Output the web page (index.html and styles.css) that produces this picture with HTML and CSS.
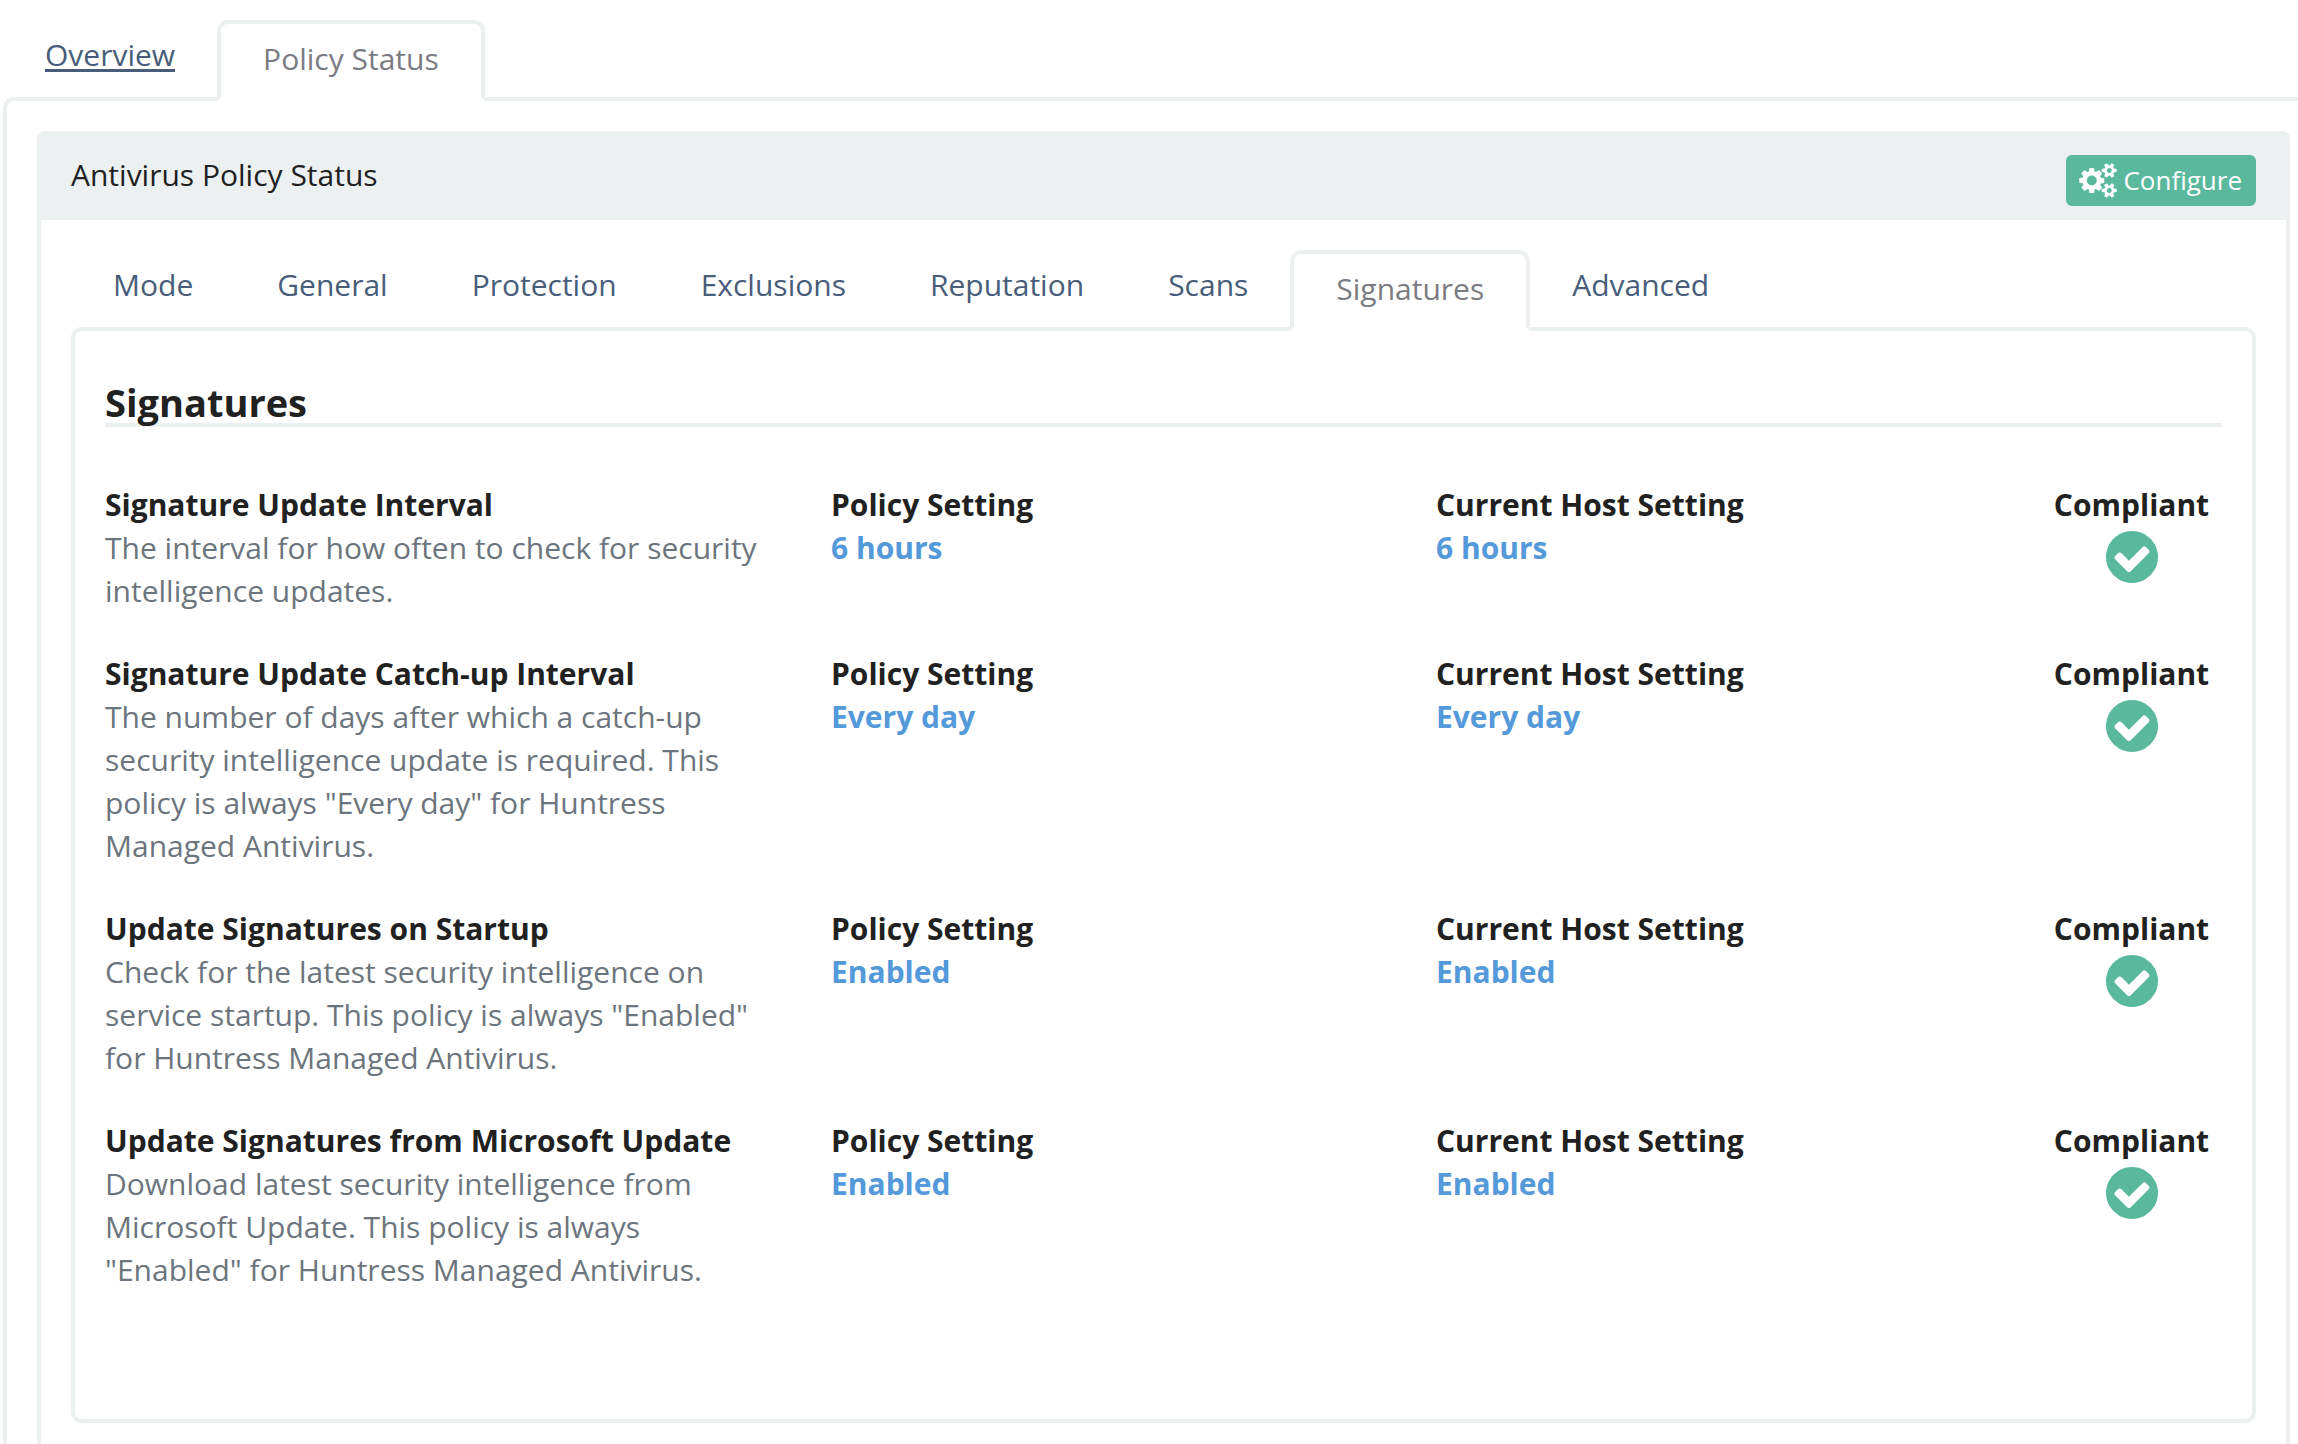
FILE: index.html
```html
<!DOCTYPE html>
<html lang="en">
<head>
<meta charset="utf-8">
<title>Antivirus Policy Status</title>
<link rel="stylesheet" href="styles.css">
</head>
<body>
<svg class="sprite" aria-hidden="true">
  <symbol id="check" viewBox="128 128 1536 1536"><path d="M1412 734q0-28-18-46l-91-90q-19-19-45-19t-45 19l-408 407-226-226q-19-19-45-19t-45 19l-91 90q-18 18-18 46 0 27 18 45l362 362q19 19 45 19 27 0 46-19l543-543q18-18 18-45zm252 162q0 209-103 385.5t-279.5 279.5-385.5 103-385.5-103-279.5-279.5-103-385.5 103-385.5 279.5-279.5 385.5-103 385.5 103 279.5 279.5 103 385.5z"/></symbol>
  <symbol id="cogs" viewBox="0 0 1920 1792"><path d="M896 896q0-106-75-181t-181-75-181 75-75 181 75 181 181 75 181-75 75-181zm768 512q0-52-38-90t-90-38-90 38-38 90q0 53 37.5 90.5t90.5 37.5 90.5-37.5 37.5-90.5zm0-1024q0-52-38-90t-90-38-90 38-38 90q0 53 37.5 90.5t90.5 37.5 90.5-37.5 37.5-90.5zm-384 421v185q0 10-7 19.5t-16 10.5l-155 24q-11 35-32 76 34 48 90 115 7 11 7 20 0 12-7 19-23 30-82.5 89.5t-78.5 59.5q-11 0-21-7l-115-90q-37 19-77 31-11 108-23 155-7 24-30 24h-186q-11 0-20-7.5t-10-17.5l-23-153q-34-10-75-31l-118 89q-7 7-20 7-11 0-21-8-144-133-144-160 0-9 7-19 10-14 41-53t47-61q-23-44-35-82l-152-24q-10-1-17-9.5t-7-19.5v-185q0-10 7-19.5t16-10.5l155-24q11-35 32-76-34-48-90-115-7-11-7-20 0-12 7-20 22-30 82-89t79-59q11 0 21 7l115 90q34-18 77-32 11-108 23-154 7-24 30-24h186q11 0 20 7.5t10 17.5l23 153q34 10 75 31l118-89q8-7 20-7 11 0 21 8 144 133 144 160 0 8-7 19-12 16-42 54t-45 60q23 48 34 82l152 23q10 2 17 10.5t7 19.5zm640 533v140q0 16-149 31-12 27-30 52 51 113 51 138 0 4-4 7-122 71-124 71-8 0-46-47t-52-68q-20 2-30 2t-30-2q-14 21-52 68t-46 47q-2 0-124-71-4-3-4-7 0-25 51-138-18-25-30-52-149-15-149-31v-140q0-16 149-31 13-29 30-52-51-113-51-138 0-4 4-7 4-2 35-20t59-34 30-16q8 0 46 46.5t52 67.5q20-2 30-2t30 2q51-71 92-112l6-2q4 0 124 70 4 3 4 7 0 25-51 138 17 23 30 52 149 15 149 31zm0-1024v140q0 16-149 31-12 27-30 52 51 113 51 138 0 4-4 7-122 71-124 71-8 0-46-47t-52-68q-20 2-30 2t-30-2q-14 21-52 68t-46 47q-2 0-124-71-4-3-4-7 0-25 51-138-18-25-30-52-149-15-149-31v-140q0-16 149-31 13-29 30-52-51-113-51-138 0-4 4-7 4-2 35-20t59-34 30-16q8 0 46 46.5t52 67.5q20-2 30-2t30 2q51-71 92-112l6-2q4 0 124 70 4 3 4 7 0 25-51 138 17 23 30 52 149 15 149 31z"/></symbol>
</svg>
<div class="page">
  <nav class="tabs" aria-label="Sections">
    <a class="tab tab-hover" href="#overview">Overview</a>
    <a class="tab tab-active" href="#policy" aria-current="page">Policy Status</a>
  </nav>
  <main class="outer-panel">
    <section class="card">
      <header class="card-header">
        <h1 class="card-title">Antivirus Policy Status</h1>
        <button class="configure" type="button"><svg class="cogs-icon" aria-hidden="true"><use href="#cogs"/></svg>Configure</button>
      </header>
      <div class="card-body">
        <nav class="tabs" aria-label="Policy areas">
          <a class="tab" href="#mode">Mode</a>
          <a class="tab" href="#general">General</a>
          <a class="tab" href="#protection">Protection</a>
          <a class="tab" href="#exclusions">Exclusions</a>
          <a class="tab" href="#reputation">Reputation</a>
          <a class="tab" href="#scans">Scans</a>
          <a class="tab tab-active" href="#signatures" aria-current="page">Signatures</a>
          <a class="tab" href="#advanced">Advanced</a>
        </nav>
        <section class="panel">
          <h2 class="panel-title">Signatures</h2>
          <div class="policies">
            <article class="policy">
              <div class="about"><h3 class="label">Signature Update Interval</h3><p class="description">The interval for how often to check for security intelligence updates.</p></div>
              <div><h4 class="label">Policy Setting</h4><p class="value">6 hours</p></div>
              <div><h4 class="label">Current Host Setting</h4><p class="value">6 hours</p></div>
              <div class="status"><h4 class="label">Compliant</h4><svg class="check-icon" role="img" aria-label="Yes"><use href="#check"/></svg></div>
            </article>
            <article class="policy">
              <div class="about"><h3 class="label">Signature Update Catch-up Interval</h3><p class="description">The number of days after which a catch-up security intelligence update is required. This policy is always "Every day" for Huntress Managed Antivirus.</p></div>
              <div><h4 class="label">Policy Setting</h4><p class="value">Every day</p></div>
              <div><h4 class="label">Current Host Setting</h4><p class="value">Every day</p></div>
              <div class="status"><h4 class="label">Compliant</h4><svg class="check-icon" role="img" aria-label="Yes"><use href="#check"/></svg></div>
            </article>
            <article class="policy">
              <div class="about"><h3 class="label">Update Signatures on Startup</h3><p class="description">Check for the latest security intelligence on service startup. This policy is always "Enabled" for Huntress Managed Antivirus.</p></div>
              <div><h4 class="label">Policy Setting</h4><p class="value">Enabled</p></div>
              <div><h4 class="label">Current Host Setting</h4><p class="value">Enabled</p></div>
              <div class="status"><h4 class="label">Compliant</h4><svg class="check-icon" role="img" aria-label="Yes"><use href="#check"/></svg></div>
            </article>
            <article class="policy">
              <div class="about"><h3 class="label">Update Signatures from Microsoft Update</h3><p class="description">Download latest security intelligence from Microsoft Update. This policy is always "Enabled" for Huntress Managed Antivirus.</p></div>
              <div><h4 class="label">Policy Setting</h4><p class="value">Enabled</p></div>
              <div><h4 class="label">Current Host Setting</h4><p class="value">Enabled</p></div>
              <div class="status"><h4 class="label">Compliant</h4><svg class="check-icon" role="img" aria-label="Yes"><use href="#check"/></svg></div>
            </article>
          </div>
        </section>
      </div>
    </section>
  </main>
</div>
</body>
</html>
```
FILE: styles.css
```css
:root {
  --line: #ecf0f1;
  --green: #5ab99d;
  --link: #475d7a;
  --text: #212121;
}

* { box-sizing: border-box; }

body {
  margin: 0;
  background: #fff;
  color: var(--text);
  font: 30px/43px "Open Sans", "Noto Sans", sans-serif;
}

h1, h2, h3, h4, p { margin: 0; font-size: inherit; }

.sprite { display: none; }

.page {
  display: flex;
  flex-direction: column;
  min-height: 100vh;
  padding: 20px 0 0 3px;
}

/* Tabs: the active one overlaps the top border of the panel below */
.tabs { display: flex; }

.tab {
  padding: 13px 42px 17px;
  color: var(--link);
  text-decoration: none;
}

.tab:hover, .tab-hover {
  text-decoration: underline;
  text-decoration-thickness: 3px;
  text-underline-offset: 3px;
}

.tab-active {
  margin-bottom: -4px;
  border: 4px solid var(--line);
  border-bottom-color: #fff;
  border-radius: 11px 11px 0 0;
  background: #fff;
  color: #7b7b82;
  position: relative;
}

.outer-panel {
  display: flex;
  flex: 1;
  padding: 30px 8px 0 30px;
  border: 4px solid var(--line);
  border-width: 4px 0 0 4px;
  border-radius: 11px 0 0 0;
}

.card {
  flex: 1;
  border: 4px solid var(--line);
  border-bottom: 0;
  border-radius: 8px 8px 0 0;
}

.card-header {
  display: flex;
  justify-content: space-between;
  align-items: flex-start;
  padding: 20px 30px 14px;
  background: var(--line);
}

.card-title {
  font-weight: 400;
  line-height: 40px;
}

.configure {
  display: flex;
  align-items: center;
  gap: 6px;
  padding: 4px 14px 4px 13px;
  border: 0;
  border-radius: 6px;
  background: var(--green);
  color: #fff;
  font: inherit;
  font-size: 26px;
}

.cogs-icon {
  width: 38px;
  height: 35px;
  fill: currentColor;
}

.card-body { padding: 30px 30px 20px; }

.panel {
  padding: 50px 30px 128px;
  border: 4px solid var(--line);
  border-radius: 11px;
}

.panel-title {
  border-bottom: 4px solid var(--line);
  font-size: 38px;
  line-height: 42px;
}

.policies {
  display: grid;
  gap: 40px;
  margin-top: 56px;
}

.policy {
  display: grid;
  grid-template-columns: 726fr 605fr 605fr 181fr;
}

.about { padding-right: 60px; }

.label { font-weight: 700; }

.description { color: #6c757d; }

.value {
  color: #5499da;
  font-weight: 700;
}

.status {
  display: flex;
  flex-direction: column;
  align-items: center;
}

.check-icon {
  width: 52px;
  height: 52px;
  margin-top: 5px;
  fill: var(--green);
}
```
